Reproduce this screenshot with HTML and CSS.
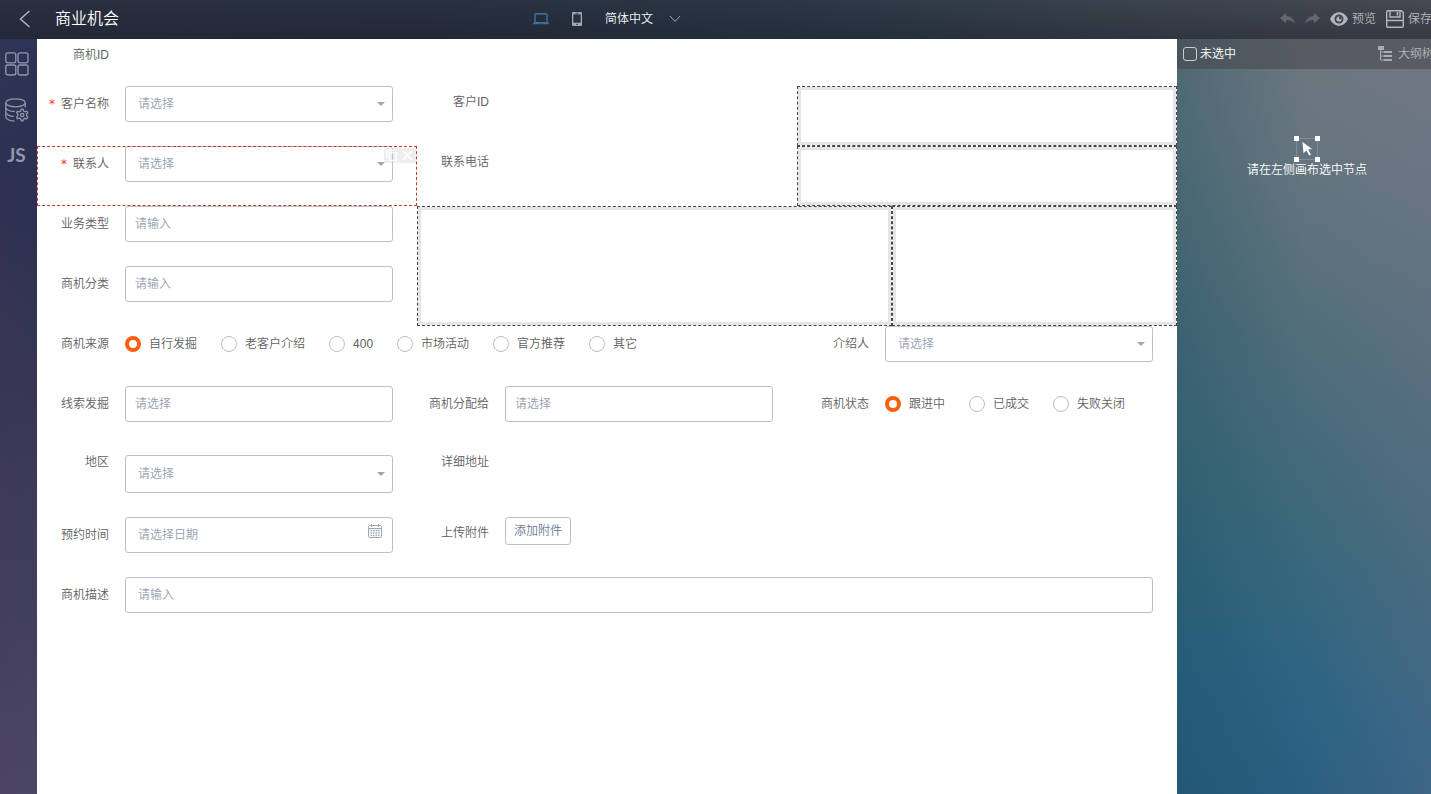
FILE: index.html
```html
<!DOCTYPE html>
<html lang="zh-CN">
<head>
  <meta charset="UTF-8">
  <meta name="viewport" content="width=device-width, initial-scale=1.0">
  <title>商业机会</title>
  <link rel="stylesheet" href="styles.css">
</head>
<body>
  <header class="topbar">
    <button class="icon-btn back" aria-label="返回">
      <svg width="12" height="18" viewBox="0 0 12 18"><path d="M10.500 1L1.500 9l9 8" fill="none" stroke="#b4b8c0" stroke-width="1.400"/></svg>
    </button>
    <div class="topbar-main">
      <h1 class="title">商业机会</h1>
      <div class="devices">
        <button class="icon-btn" aria-label="电脑">
          <svg width="16" height="12" viewBox="0 0 16 12"><rect x="2" y=".7" width="12" height="9" rx="1" fill="none" stroke="#41719c" stroke-width="1.400"/><path d="M0 9.600h5.500l.6.800h3.800l.6-.8H16v1.600H0z" fill="#41719c"/></svg>
        </button>
        <button class="icon-btn" aria-label="手机">
          <svg width="10" height="14" viewBox="0 0 10 14"><rect width="10" height="14" rx="1.200" fill="#a5abb5"/><path d="M1.300 2.300h7.400v8.400H1.300z" fill="#27303e"/><path d="M3.500 1.200h3M4 12.400h2" stroke="#27303e" stroke-width=".8"/></svg>
        </button>
        <button class="icon-btn lang">简体中文
          <svg width="12" height="8" viewBox="0 0 12 8"><path d="M1 1l5 5.500L11 1" fill="none" stroke="#9da3ad"/></svg>
        </button>
      </div>
    </div>
    <div class="tools">
      <button class="icon-btn" aria-label="撤销">
        <svg width="15" height="12" viewBox="0 0 15 12"><path d="M6 0v3c5 0 8 3 9 8-2-3-5-4-9-4v3.500L0 5z" fill="#62676f"/></svg>
      </button>
      <button class="icon-btn" aria-label="重做">
        <svg width="15" height="12" viewBox="0 0 15 12"><path d="M9 0v3C4 3 1 6 0 11c2-3 5-4 9-4v3.500L15 5z" fill="#62676f"/></svg>
      </button>
      <button class="icon-btn">
        <svg width="18" height="14" viewBox="0 0 18 14"><path d="M0 7C4-2 14-2 18 7c-4 9-14 9-18 0z" fill="#b2b5ba"/><circle cx="9" cy="7" r="4.500" fill="#3f444d"/><circle cx="9" cy="7" r="2.600" fill="#b2b5ba"/><circle cx="10" cy="6" r="1.200" fill="#3f444d"/></svg>
        预览
      </button>
      <button class="icon-btn">
        <svg width="18" height="18" viewBox="0 0 18 18"><path d="M.7 2Q.7.700 2 .7h13.500l1.800 1.800V16q0 1.300-1.300 1.300H2Q.7 17.300.7 16z" fill="none" stroke="#b2b5ba" stroke-width="1.400"/><path d="M4 1v6h10V1M1 10.500h16" fill="none" stroke="#b2b5ba" stroke-width="1.400"/><path d="M11.500 2v3.500" stroke="#b2b5ba" stroke-width="1.600"/></svg>
        保存
      </button>
    </div>
  </header>

  <div class="workspace">
    <nav class="sidebar">
      <button class="icon-btn" aria-label="组件">
        <svg width="24" height="24" viewBox="0 0 24 24" fill="none" stroke="#9298aa" stroke-width="1.300"><rect x=".8" y=".8" width="10" height="10" rx="2"/><rect x="13" y=".8" width="10" height="10" rx="2"/><rect x=".8" y="13" width="10" height="10" rx="2"/><rect x="13" y="13" width="10" height="10" rx="2"/></svg>
      </button>
      <button class="icon-btn" aria-label="数据源">
        <svg width="24" height="24" viewBox="0 0 24 24" fill="none" stroke="#9298aa" stroke-width="1.300"><ellipse cx="10.500" cy="4.800" rx="9.700" ry="4"/><path d="M.8 5v14c0 2 4 4 8.500 4M20.200 5v4.500M.8 9.500c0 2 4 4 9 4M.8 14.300c0 2 4 4 8 4"/><path d="M17 11.200l1 0 .6 1.800 1.500.8 1.800-.6.9 1.400-1.200 1.600v1.600l1.200 1.400-.9 1.600-1.900-.5-1.500.8-.6 1.700h-1.500l-.7-1.800-1.400-.8-1.900.6-.8-1.500 1.200-1.500v-1.600l-1.200-1.500.8-1.400 1.900.5 1.400-.8.6-1.800z"/><circle cx="17.200" cy="17" r="1.700"/></svg>
      </button>
      <button class="icon-btn js">JS</button>
    </nav>

    <main class="canvas">
      <form class="form">
        <div class="item span-12 text-row"><span class="label">商机ID</span></div>

        <div class="item">
          <label class="label required" for="customer">客户名称</label>
          <div class="select"><select id="customer"><option>请选择</option></select></div>
        </div>
        <div class="item text-row"><span class="label">客户ID</span></div>
        <div class="slot"></div>

        <div class="item selected">
          <label class="label required" for="contact">联系人</label>
          <div class="select"><select id="contact"><option>请选择</option></select></div>
          <div class="actions">
            <svg width="32" height="15" viewBox="0 0 32 15" fill="none" stroke="#fff" stroke-width="1.500"><path d="M3 10V2h7M5.500 4.500h7v8h-7zM19 3l9 9M28 3l-9 9"/></svg>
          </div>
        </div>
        <div class="item text-row"><span class="label">联系电话</span></div>
        <div class="slot"></div>

        <div class="item">
          <label class="label" for="biz">业务类型</label>
          <input class="input" id="biz" type="text" placeholder="请输入">
        </div>
        <div class="slot span-5 tall"></div>
        <div class="slot span-3 tall"></div>
        <div class="item">
          <label class="label" for="category">商机分类</label>
          <input class="input" id="category" type="text" placeholder="请输入">
        </div>

        <div class="item span-8">
          <span class="label">商机来源</span>
          <div class="radios">
            <label class="radio"><input type="radio" name="source" checked>自行发掘</label>
            <label class="radio"><input type="radio" name="source">老客户介绍</label>
            <label class="radio"><input type="radio" name="source">400</label>
            <label class="radio"><input type="radio" name="source">市场活动</label>
            <label class="radio"><input type="radio" name="source">官方推荐</label>
            <label class="radio"><input type="radio" name="source">其它</label>
          </div>
        </div>
        <div class="item">
          <label class="label" for="introducer">介绍人</label>
          <div class="select"><select id="introducer"><option>请选择</option></select></div>
        </div>

        <div class="item">
          <label class="label" for="lead">线索发掘</label>
          <input class="input" id="lead" type="text" placeholder="请选择">
        </div>
        <div class="item">
          <label class="label" for="owner">商机分配给</label>
          <input class="input" id="owner" type="text" placeholder="请选择">
        </div>
        <div class="item">
          <span class="label">商机状态</span>
          <div class="radios">
            <label class="radio"><input type="radio" name="status" checked>跟进中</label>
            <label class="radio"><input type="radio" name="status">已成交</label>
            <label class="radio"><input type="radio" name="status">失败关闭</label>
          </div>
        </div>

        <div class="item text-row">
          <label class="label" for="region">地区</label>
          <div class="select region"><select id="region"><option>请选择</option></select></div>
        </div>
        <div class="item span-8 text-row"><span class="label">详细地址</span></div>

        <div class="item">
          <label class="label" for="date">预约时间</label>
          <div class="date">
            <input class="input wide-pad" id="date" type="text" placeholder="请选择日期">
            <svg class="calendar" width="14" height="14" viewBox="0 0 14 14" fill="none" stroke="#9aa8b8"><rect x=".5" y="1.500" width="13" height="12" rx="1"/><path d="M.5 4.500h13M3.500 0v3M10.500 0v3"/><path d="M2.500 6.500h9M2.500 9h9M2.500 11.500h9" stroke-width="1.300" stroke-dasharray="1.500 1"/></svg>
          </div>
        </div>
        <div class="item span-8 text-row">
          <span class="label">上传附件</span>
          <button class="upload" type="button">添加附件</button>
        </div>

        <div class="item span-12">
          <label class="label" for="desc">商机描述</label>
          <input class="input wide-pad" id="desc" type="text" placeholder="请输入">
        </div>
      </form>
    </main>

    <aside class="panel">
      <div class="panel-head">
        <label class="check"><input type="checkbox">未选中</label>
        <button class="icon-btn outline">
          <svg width="14" height="16" viewBox="0 0 14 16"><path d="M0 0h6v4H0zM6 5h8v2H6zM6 9h8v2H6zM6 13h8v2H6z" fill="#a9adb2"/><path d="M2.500 3v11H6M2.500 10H6M2.500 6H6" fill="none" stroke="#a9adb2"/></svg>
          大纲树
        </button>
      </div>
      <div class="empty">
        <svg width="26" height="26" viewBox="0 0 26 26"><rect x="2.500" y="2.500" width="21" height="21" fill="none" stroke="#a7b1b9" stroke-width=".8" stroke-dasharray="1 1"/><path d="M0 0h5v5H0zM21 0h5v5h-5zM0 21h5v5H0zM21 21h5v5h-5z" fill="#fff"/><path d="M8.500 6l9.500 7-4 .5 3 5-1.800 1-2.700-5-3 2.800z" fill="#fff"/></svg>
        <p>请在左侧画布选中节点</p>
      </div>
    </aside>
  </div>
</body>
</html>
```
FILE: styles.css
```css
* {
  box-sizing: border-box;
}

body {
  display: flex;
  flex-direction: column;
  height: 100vh;
  margin: 0;
  overflow: hidden;
  font-family: "Liberation Sans", "Noto Sans CJK SC", sans-serif;
  font-size: 12px;
  font-weight: 350;
  line-height: 17px;
  color: #606060;
  background: #2b3150;
}

button, input, select {
  font: inherit;
}

.icon-btn {
  display: flex;
  align-items: center;
  padding: 0;
  border: 0;
  background: none;
  color: #b2b5ba;
  white-space: nowrap;
  cursor: pointer;
}

/* top bar */
.topbar {
  display: grid;
  grid-template-columns: 37px 1fr 254px;
  flex: none;
  height: 39px;
  padding-bottom: 1px;
  background:
    linear-gradient(to bottom, transparent, rgba(20, 20, 34, 0.3)),
    linear-gradient(to right, #2a3041, #29303f 30%, #293745 55%, #3b434d 80%, #464951);
}

.back {
  justify-content: flex-end;
  padding-right: 6px;
}

.topbar-main {
  display: grid;
  grid-template-columns: 1fr auto 1fr;
  align-items: center;
}

.title {
  margin: 0;
  padding-left: 18px;
  font-size: 16px;
  font-weight: 350;
  line-height: 22px;
  color: #fff;
}

.devices {
  display: flex;
  align-items: center;
  gap: 23px;
}

.lang {
  gap: 16px;
  color: #f4f5f6;
}

.tools {
  display: flex;
  align-items: center;
  gap: 10px;
  padding-left: 103px;
  overflow: hidden;
}

.tools .icon-btn {
  flex: none;
  gap: 4px;
}

.workspace {
  display: grid;
  grid-template-columns: 37px 1fr 254px;
  flex: 1;
  min-height: 0;
}

/* left icons */
.sidebar {
  display: flex;
  flex-direction: column;
  align-items: center;
  gap: 22px;
  padding: 13px 4px 0 0;
  background:
    linear-gradient(to right, rgba(80, 50, 80, 0.1), transparent),
    linear-gradient(to bottom, #2c3457, #2b3052 20%, #383855 50%, #413f5d 75%, #4c4666);
}

.js {
  font-family: Lato, sans-serif;
  font-size: 19px;
  font-weight: bold;
  line-height: 22px;
  color: #9298aa;
}

/* form */
.canvas {
  background: #fff;
  overflow: hidden;
}

.form {
  display: grid;
  grid-template-columns: repeat(12, 1fr);
  grid-template-rows: 47px repeat(6, 60px) 71px 60px 60px;
}

.item {
  position: relative;
  grid-column: span 4;
  display: flex;
  align-items: flex-start;
  padding-right: 24px;
}

.span-3 { grid-column: span 3; }
.span-5 { grid-column: span 5; }
.span-8 { grid-column: span 8; }
.span-12 { grid-column: span 12; }

.label {
  flex: none;
  width: 72px;
  margin-right: 16px;
  line-height: 37px;
  text-align: right;
  white-space: nowrap;
}

.text-row .label {
  line-height: 33px;
}

.required::before {
  content: "*";
  margin-right: 6px;
  font-family: "DejaVu Sans", sans-serif;
  font-weight: normal;
  color: #f33;
}

.input,
.select select {
  width: 100%;
  height: 36px;
  padding: 0 9px;
  border: 1px solid #bcc0c8;
  border-radius: 3px;
  background: #fff;
  color: #98a1b1;
  outline: none;
}

.input::placeholder {
  color: #98a1b1;
}

.wide-pad,
.select select {
  padding: 0 12px;
}

.select,
.date {
  position: relative;
  flex: 1;
}

.select select {
  display: block;
  appearance: none;
}

.select::after {
  content: "";
  position: absolute;
  top: 16px;
  right: 8px;
  border: 4px solid transparent;
  border-top-color: #a0a7af;
  border-bottom: 0;
  pointer-events: none;
}

.region {
  margin-top: 9px;
}

.region select {
  height: 38px;
}

.region::after {
  top: 17px;
}

.calendar {
  position: absolute;
  top: 7px;
  right: 11px;
}

.radios {
  display: flex;
  gap: 24px;
}

.radio {
  display: flex;
  align-items: center;
  gap: 8px;
  height: 36px;
  white-space: nowrap;
}

.radio input {
  appearance: none;
  width: 16px;
  height: 16px;
  margin: 0;
  border: 1px solid #b9bfca;
  border-radius: 50%;
}

.radio input:checked {
  border: 4px solid #f9600b;
}

.upload {
  height: 28px;
  padding: 0 8px;
  border: 1px solid #bcc0c8;
  border-radius: 3px;
  background: #fff;
  color: #6b7890;
}

.slot {
  grid-column: span 4;
  border: 1px dashed #444;
  box-shadow: inset 0 0 0 3px #e5e5e5;
}

.slot.span-5 { grid-column: span 5; }
.slot.span-3 { grid-column: span 3; }

.tall {
  grid-row: span 2;
}

.selected::after {
  content: "";
  position: absolute;
  inset: 0;
  border: 1px dashed #c0392b;
  pointer-events: none;
}

.actions {
  position: absolute;
  top: 2px;
  right: 1px;
  height: 15px;
  background: rgba(200, 200, 200, 0.3);
}

.actions svg,
.calendar {
  display: block;
}

/* right panel */
.panel {
  overflow: hidden;
  background:
    linear-gradient(to right, rgba(20, 75, 90, 0.3), transparent 50%, rgba(115, 115, 140, 0.25)),
    linear-gradient(195deg, #70777f, #64757f 20%, #4f6d7a 42%, #3a687b 65%, #2c6384 85%, #2a5c80);
}

.panel-head {
  display: flex;
  align-items: center;
  height: 30px;
  padding-left: 6px;
  background: rgba(66, 64, 70, 0.5);
}

.check {
  display: flex;
  flex: none;
  align-items: center;
  gap: 3px;
  width: 195px;
  color: #fff;
}

.check input {
  appearance: none;
  width: 14px;
  height: 14px;
  margin: 0;
  border: 1px solid #c9cdd0;
  border-radius: 3px;
}

.outline {
  flex: none;
  gap: 6px;
}

.empty {
  display: flex;
  flex-direction: column;
  align-items: center;
  padding: 67px 0 0 6px;
  color: #fff;
}

.empty p {
  margin: 0;
}
```
